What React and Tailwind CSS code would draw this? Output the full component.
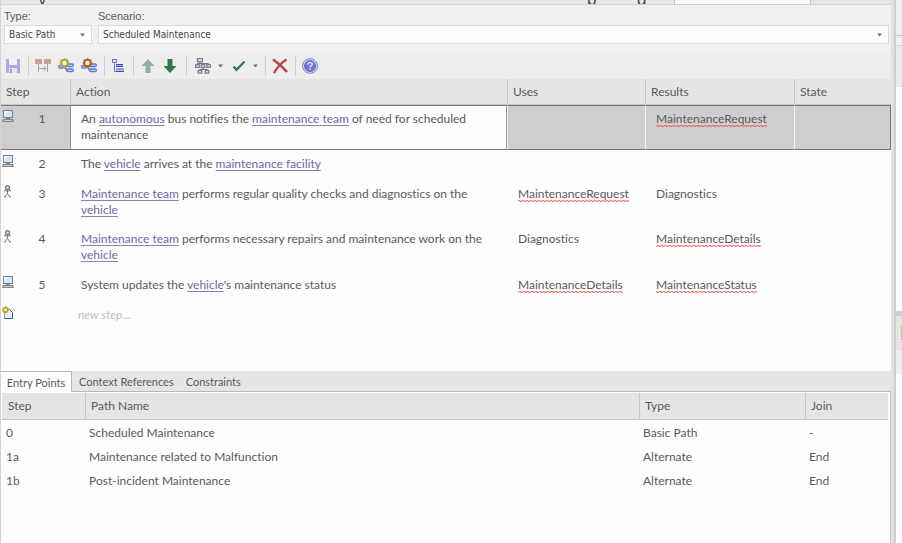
import React from "react";

const SANS = "font-['Lato','Open_Sans',sans-serif] [font-variant-ligatures:none]";

function Sep() {
  return <span className="h-5 w-px bg-[#cfcfcf]" />;
}

function Caret() {
  return (
    <svg width="5" height="4" viewBox="0 0 5 4" className="block" aria-hidden="true">
      <path d="M0 0.5H5L2.5 3.5Z" fill="#6e6e6e" />
    </svg>
  );
}

function SaveIcon() {
  return (
    <svg width="16" height="16" viewBox="0 0 16 16">
      <path d="M1 1H15V15H2L1 14Z" fill="#a9abe2" />
      <rect x="4" y="1" width="8" height="6" fill="#f1f1f7" />
      <rect x="4" y="10" width="8" height="5" fill="#e6e6f2" />
      <rect x="5" y="11" width="2" height="4" fill="#9a9fb8" />
    </svg>
  );
}

function LinkStepsIcon() {
  return (
    <svg width="16" height="16" viewBox="0 0 16 16" fill="none">
      <rect x="0.5" y="1.5" width="6" height="4" fill="#d39c94" stroke="#c7a29d" />
      <rect x="9.5" y="1.5" width="6" height="4" fill="#d39c94" stroke="#c7a29d" />
      <path d="M3.5 6V14M12.5 6V14M4 10.5H11M8.5 8L11 10.5L8.5 13" stroke="#a5a0aa" />
    </svg>
  );
}

function PathIcon({ color }) {
  return (
    <svg width="16" height="16" viewBox="0 0 16 16" fill="none">
      <path d="M4 8.5H6L9 12.5M6 8.5H10" stroke="#5873cf" strokeWidth="1.4" />
      <rect x="0.7" y="7.5" width="4.6" height="2.6" rx="1" fill="#b9c9fa" stroke="#5f7bdb" strokeWidth="1.3" />
      <rect x="9.7" y="6" width="5.6" height="2.6" rx="1" fill="#b9c9fa" stroke="#5f7bdb" strokeWidth="1.3" />
      <rect x="8.7" y="11" width="6.6" height="2.6" rx="1" fill="#b9c9fa" stroke="#5f7bdb" strokeWidth="1.3" />
      <path d="M6.5 0L8.2 1.2H10.3V3.3L11.6 5L10.3 6.7V8.8H8.2L6.5 10L4.8 8.8H2.7V6.7L1.4 5L2.7 3.3V1.2H4.8Z" fill={color} />
      <circle cx="6.5" cy="5" r="2.3" fill="#fff6ce" />
    </svg>
  );
}

function TreeIcon() {
  return (
    <svg width="14" height="16" viewBox="0 0 14 16" fill="none">
      <rect x="1.5" y="1.5" width="4" height="3" fill="#dde5ff" stroke="#5b78d8" />
      <path d="M3.5 5V13.5H6" stroke="#5b78d8" />
      <path d="M5 6.5H12M5 8.5H12M5 11H13M5 13.5H13" stroke="#3f51a4" />
      <path d="M5 7.5H12M5 12.2H13" stroke="#86a3f3" />
    </svg>
  );
}

function ArrowIcon({ color, down = false }) {
  return (
    <svg width="14" height="16" viewBox="0 0 14 16">
      <path
        d={down ? "M4.5 1H9.5V8H13.5L7 15L0.5 8H4.5Z" : "M7 1L13.5 8H9.5V15H4.5V8H0.5Z"}
        fill={color}
      />
    </svg>
  );
}

function StructureIcon() {
  return (
    <svg width="16" height="16" viewBox="0 0 16 16" fill="none" stroke="#77758f" strokeWidth="1.2">
      <rect x="2.5" y="0.7" width="5" height="3" />
      <path d="M5 4V5.5H13V7M5 5.5H2.5V7M8 5.5V7M8 9.5V11.5M5 13V11.5H12V13" />
      <rect x="0.7" y="6.8" width="3.6" height="2.6" />
      <rect x="6.2" y="6.8" width="3.6" height="2.6" />
      <rect x="11.7" y="6.8" width="3.6" height="2.6" />
      <rect x="3.2" y="12.5" width="3.6" height="2.6" />
      <rect x="10.2" y="12.5" width="3.6" height="2.6" />
    </svg>
  );
}

function CheckIcon() {
  return (
    <svg width="14" height="16" viewBox="0 0 14 16">
      <path d="M1.5 8.5L4.5 11.8L12.5 3.5" fill="none" stroke="#36794d" strokeWidth="2.4" />
    </svg>
  );
}

function DeleteIcon() {
  return (
    <svg width="16" height="16" viewBox="0 0 16 16" fill="none" stroke="#bb4440">
      <path d="M1 1.5Q8 6 15 14" strokeWidth="2.6" />
      <path d="M14.5 1.5Q7 6 2 15" strokeWidth="2.2" />
    </svg>
  );
}

function HelpIcon() {
  return (
    <svg width="16" height="16" viewBox="0 0 16 16" fill="none">
      <circle cx="8" cy="8" r="7.4" fill="#d5dbfa" stroke="#7484d1" />
      <circle cx="8" cy="8" r="5.5" fill="#7078c8" stroke="#6570c4" />
      <path d="M5.8 6.6Q5.9 4.6 8 4.6Q10.2 4.6 10.2 6.3Q10.2 7.2 9 7.9Q8 8.5 8 9.4" stroke="#eef" strokeWidth="1.3" />
      <rect x="7.3" y="10.4" width="1.4" height="1.3" fill="#eef" />
    </svg>
  );
}

function ComputerIcon() {
  return (
    <svg width="12" height="13" viewBox="0 0 12 13" role="img" aria-label="System" className="block">
      <rect x="1.5" y="0.5" width="9" height="7" fill="#cfe5f8" stroke="#77818f" />
      <path d="M2 1H7L2 6Z" fill="#eef7ff" />
      <path d="M4 8H8V9H11L12 12H0L1 9H4Z" fill="#858585" />
      <path d="M2 10.5H10" stroke="#cfcfcf" />
    </svg>
  );
}

function ActorIcon() {
  return (
    <svg width="12" height="13" viewBox="0 0 12 13" fill="none" stroke="#777" role="img" aria-label="Actor" className="block">
      <circle cx="5.5" cy="2.7" r="2" fill="#ddd" strokeWidth="1.3" />
      <path d="M5.5 4.5V8.5M2 5.5L5.5 6.2L9 5.5M5.5 8.5L3 12M5.5 8.5L8 12M2 12H3.5M7.5 12H9" />
    </svg>
  );
}

function NewStepIcon() {
  return (
    <svg width="12" height="14" viewBox="0 0 12 14" role="img" aria-label="New" className="block">
      <path d="M2.5 3.5H7.5L10.5 6.5V12.5H2.5Z" fill="#e9efff" stroke="#8a9be0" />
      <path d="M7.5 3.5L10.5 6.5V12.5H2.5" fill="none" stroke="#3c4fa8" />
      <path d="M3.5 0L4.7 1.2H6.2V2.5L7.3 3.7L6.2 5V6.5H4.7L3.5 7.7L2.3 6.5H0.8V5L0 3.7L0.8 2.5V1.2H2.3Z" fill="#b5a420" />
      <circle cx="3.5" cy="3.8" r="1.5" fill="#fff6b0" />
    </svg>
  );
}

function ToolButton({ label, children }) {
  return (
    <button type="button" aria-label={label} className="flex h-5 items-center gap-[7px]">
      {children}
    </button>
  );
}

function Term({ children }) {
  return (
    <a href="#glossary" className="text-[#6c68a4] underline decoration-[#8583b4] underline-offset-2">
      {children}
    </a>
  );
}

function Misspelt({ children }) {
  return (
    <span className="bg-[linear-gradient(45deg,transparent_65%,#f04040_80%,transparent_90%),linear-gradient(135deg,transparent_5%,#f04040_15%,transparent_25%),linear-gradient(135deg,transparent_45%,#f04040_55%,transparent_65%),linear-gradient(45deg,transparent_25%,#f04040_35%,transparent_50%)] bg-[length:8px_2px] bg-bottom bg-repeat-x pb-px">
      {children}
    </span>
  );
}

const steps = [
  {
    no: 1,
    icon: <ComputerIcon />,
    height: "h-[45px]",
    action: (
      <>
        An <Term>autonomous</Term> bus notifies the <Term>maintenance team</Term> of need for scheduled maintenance
      </>
    ),
    uses: null,
    results: <Misspelt>MaintenanceRequest</Misspelt>,
    selected: true,
  },
  {
    no: 2,
    icon: <ComputerIcon />,
    height: "h-[30px]",
    action: (
      <>
        The <Term>vehicle</Term> arrives at the <Term>maintenance facility</Term>
      </>
    ),
  },
  {
    no: 3,
    icon: <ActorIcon />,
    height: "h-[45px]",
    action: (
      <>
        <Term>Maintenance team</Term> performs regular quality checks and diagnostics on the <Term>vehicle</Term>
      </>
    ),
    uses: <Misspelt>MaintenanceRequest</Misspelt>,
    results: "Diagnostics",
  },
  {
    no: 4,
    icon: <ActorIcon />,
    height: "h-[46px]",
    action: (
      <>
        <Term>Maintenance team</Term> performs necessary repairs and maintenance work on the <Term>vehicle</Term>
      </>
    ),
    uses: "Diagnostics",
    results: <Misspelt>MaintenanceDetails</Misspelt>,
  },
  {
    no: 5,
    icon: <ComputerIcon />,
    height: "h-[30px]",
    action: (
      <>
        System updates the <Term>vehicle</Term>'s maintenance status
      </>
    ),
    uses: <Misspelt>MaintenanceDetails</Misspelt>,
    results: <Misspelt>MaintenanceStatus</Misspelt>,
  },
];

const headCell = "border-l border-[#c6c6c6] pl-[5px] text-left font-normal";

function StepTable() {
  return (
    <table className={`w-full table-fixed border-separate border-spacing-0 text-[12px] leading-4 text-[#5a5a5a] ${SANS}`}>
      <colgroup>
        <col className="w-[69px]" />
        <col />
        <col className="w-[138px]" />
        <col className="w-[149px]" />
        <col className="w-[97px]" />
      </colgroup>
      <thead>
        <tr className="h-[26px] bg-[#e5e5e5]">
          <th className="border-b border-[#c6c6c6] pl-[5px] text-left font-normal">Step</th>
          <th className={`border-b ${headCell}`}>Action</th>
          <th className={`border-b ${headCell}`}>Uses</th>
          <th className={`border-b ${headCell}`}>Results</th>
          <th className={`border-b ${headCell}`}>State</th>
        </tr>
      </thead>
      <tbody>
        {steps.map((s) => {
          const edge = s.selected ? "border-y border-y-[#777] pt-1" : "pt-[5px]";
          const side = s.selected ? "border-l border-l-[#efefef] bg-[#cecece]" : "border-l border-transparent";
          return (
            <tr key={s.no} className={`align-top ${s.height}`}>
              <td className={`${edge} pl-px ${s.selected ? "bg-[#cecece]" : ""}`}>
                <div className="flex items-start">
                  {s.icon}
                  <span className="w-[56px] pt-px text-center">{s.no}</span>
                </div>
              </td>
              <td className={`${edge} border-l pl-[10px] pr-5 ${s.selected ? "border-r border-l-[#999] border-r-[#999] bg-[#fdfdfd]" : "border-l-transparent"}`}>
                <div className="pt-px">{s.action}</div>
              </td>
              <td className={`${edge} ${side} pl-[10px]`}><div className="pt-px">{s.uses}</div></td>
              <td className={`${edge} ${side} pl-[10px]`}><div className="pt-px">{s.results}</div></td>
              <td className={`${edge} ${side} ${s.selected ? "border-r border-r-[#777]" : ""}`} />
            </tr>
          );
        })}
        <tr className="h-[30px] align-top">
          <td className="pl-px pt-[5px]"><NewStepIcon /></td>
          <td className="border-l border-transparent pl-[7px] pt-[6px] italic text-[#bdbdbd]">new step...</td>
        </tr>
      </tbody>
    </table>
  );
}

const entries = [
  ["0", "Scheduled Maintenance", "Basic Path", "-"],
  ["1a", "Maintenance related to Malfunction", "Alternate", "End"],
  ["1b", "Post-incident Maintenance", "Alternate", "End"],
];

function EntryTable() {
  return (
    <table className={`w-full table-fixed border-separate border-spacing-0 text-[12px] leading-4 text-[#5a5a5a] ${SANS}`}>
      <colgroup>
        <col className="w-[83px]" />
        <col />
        <col className="w-[166px]" />
        <col className="w-[83px]" />
      </colgroup>
      <thead>
        <tr className="h-[27px] bg-[#e5e5e5]">
          <th className="border-b border-[#c6c6c6] pl-[6px] text-left font-normal">Step</th>
          <th className={`border-b ${headCell}`}>Path Name</th>
          <th className={`border-b ${headCell}`}>Type</th>
          <th className={`border-b ${headCell}`}>Join</th>
        </tr>
      </thead>
      <tbody>
        {entries.map(([step, name, type, join]) => (
          <tr key={step} className="h-6">
            <td className="pl-1 pt-px">{step}</td>
            <td className="pl-1 pt-px">{name}</td>
            <td className="pl-1 pt-px">{type}</td>
            <td className="pl-1 pt-px">{join}</td>
          </tr>
        ))}
      </tbody>
    </table>
  );
}

function Field({ id, label, value, className }) {
  return (
    <div className={className}>
      <label htmlFor={id} className="block text-[11px] leading-4 text-[#5a5a5a]">{label}</label>
      <div className="relative mt-px">
        <select
          id={id}
          className="block h-[19px] w-full appearance-none border border-[#dadada] bg-[#fdfdfd] pl-1 font-['DejaVu_Sans_Condensed','DejaVu_Sans',sans-serif] text-[10px] leading-4 text-[#444]"
        >
          <option>{value}</option>
        </select>
        <span className="pointer-events-none absolute right-[7px] top-[8px]"><Caret /></span>
      </div>
    </div>
  );
}

export default function App() {
  return (
    <div className="flex h-screen overflow-hidden bg-[#fdfdfd] font-['Liberation_Sans',Arial,sans-serif]">
      <main className="flex min-w-0 flex-1 flex-col border-l border-[#d4d4d4]">
        <div className="flex h-[5px] shrink-0 items-end overflow-hidden border-b border-[#d2d2d2] bg-[#e7e7e7] text-[17px] leading-[9px] text-[#444]">
          <span className="w-[586px] pl-[37px]">y</span>
          <span className="w-[50px]">p</span>
          <span className="flex-1">g</span>
          <span className="h-[5px] w-[137px] border-x border-[#c4c4c4] bg-[#fdfdfd]" />
          <span className="w-[80px]" />
        </div>

        <div className="flex gap-[6px] bg-[#f0f0f0] pb-[9px] pl-[3px] pr-[2px] pt-[3px]">
          <Field id="type" label="Type:" value="Basic Path" className="w-[88px]" />
          <Field id="scenario" label="Scenario:" value="Scheduled Maintenance" className="min-w-0 flex-1" />
        </div>

        <div role="toolbar" className="flex h-[26px] items-center bg-[#eeeeee] pl-[4px]">
          <ToolButton label="Save"><SaveIcon /></ToolButton>
          <span className="flex w-[14px] justify-center"><Sep /></span>
          <ToolButton label="Link steps"><LinkStepsIcon /></ToolButton>
          <div className="flex gap-[7px] pl-[7px]">
            <ToolButton label="Alternate path"><PathIcon color="#b5a62e" /></ToolButton>
            <ToolButton label="Exception path"><PathIcon color="#a56a1c" /></ToolButton>
          </div>
          <span className="flex w-[14px] justify-center"><Sep /></span>
          <ToolButton label="Structure"><TreeIcon /></ToolButton>
          <span className="flex w-[16px] justify-center"><Sep /></span>
          <div className="flex gap-[8px]">
            <ToolButton label="Move up"><ArrowIcon color="#8fb49c" /></ToolButton>
            <ToolButton label="Move down"><ArrowIcon color="#31784b" down /></ToolButton>
          </div>
          <span className="flex w-[18px] justify-center"><Sep /></span>
          <div className="flex gap-[9px]">
            <ToolButton label="Generate diagram"><StructureIcon /><Caret /></ToolButton>
            <ToolButton label="Validate"><CheckIcon /><Caret /></ToolButton>
          </div>
          <span className="flex w-[14px] justify-center"><Sep /></span>
          <ToolButton label="Delete"><DeleteIcon /></ToolButton>
          <span className="flex w-[14px] justify-center"><Sep /></span>
          <ToolButton label="Help"><HelpIcon /></ToolButton>
        </div>

        <section className="h-[292px] shrink-0"><StepTable /></section>

        <section className="flex min-h-0 flex-1 flex-col">
          <div role="tablist" className={`flex h-[21px] shrink-0 bg-[#e5e5e5] text-[11px] leading-4 text-[#5a5a5a] ${SANS}`}>
            <button type="button" role="tab" aria-selected="true" className="w-[71px] border-r border-t border-[#b9b9b9] bg-[#fdfdfd] pt-px">Entry Points</button>
            <div className="flex flex-1 gap-3 border-b border-[#b9b9b9] pl-[7px]">
              <button type="button" role="tab" aria-selected="false" className="pt-px">Context References</button>
              <button type="button" role="tab" aria-selected="false" className="pt-px">Constraints</button>
            </div>
          </div>
          <div className="flex-1 border-r border-[#c6c6c6] pl-px pr-[2px] pt-px"><EntryTable /></div>
        </section>
      </main>

      <div className="w-[3px] shrink-0 bg-[#e1e1e1]" />
      <aside className="flex w-[8px] shrink-0 flex-col border-l-2 border-[#cecece] bg-[#fdfdfd]">
        <div className="h-[36px] border-b border-[#c4c4c4] bg-[#f0f0f0]" />
        <div className="h-[10px] border-b border-[#d4d4d4] bg-[#f0f0f0]" />
        <div className="h-[41px] bg-[#ebebeb]" />
        <div className="h-[224px]" />
        <div className="h-[5px] bg-[#cfcfcf]" />
        <div className="flex h-[34px] items-center justify-end bg-[#e5e5e5]">
          <span className="h-[14px] w-px bg-[#c4b99a]" />
        </div>
        <div className="h-[24px] bg-[#eeeeee]" />
      </aside>
    </div>
  );
}
